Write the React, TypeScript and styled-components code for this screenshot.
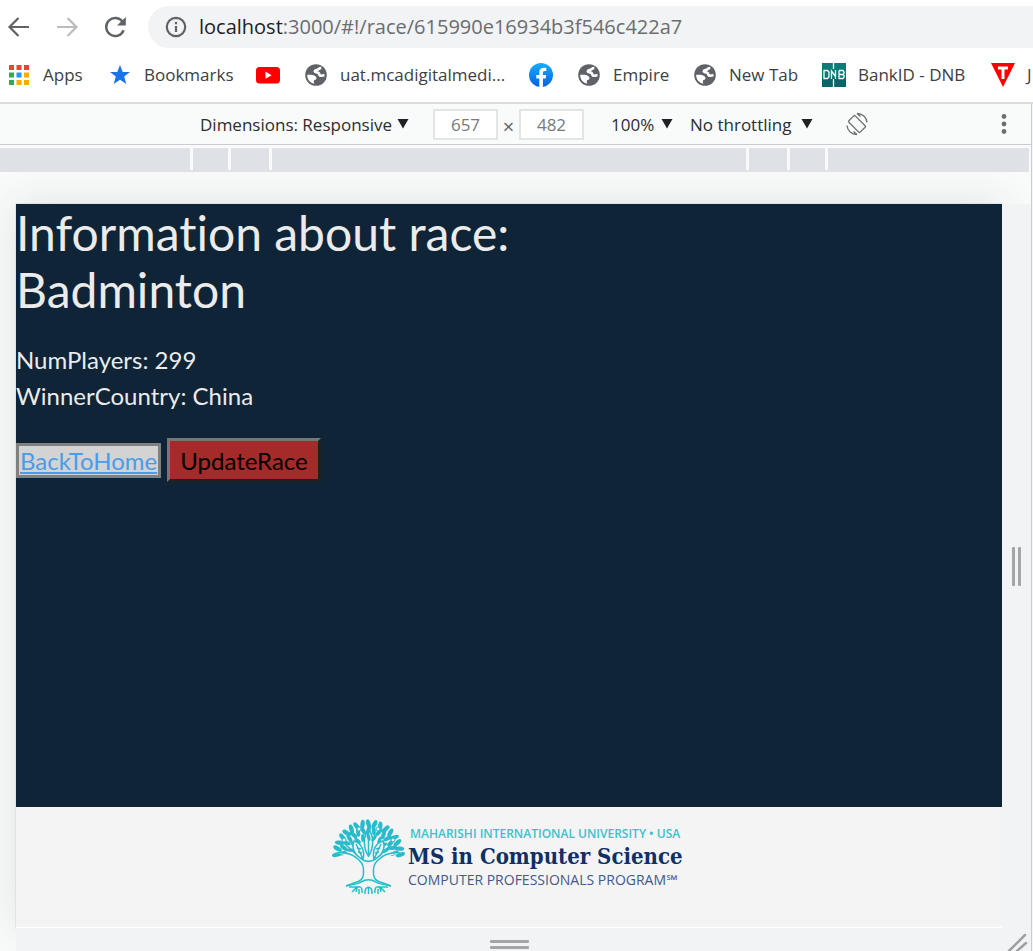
import React from "react";
import styled, { createGlobalStyle } from "styled-components";

const uiFont = `"Segoe UI", "Open Sans", "Noto Sans", sans-serif`;
const pageFont = `Lato, "Open Sans", sans-serif`;

const GlobalStyle = createGlobalStyle`
  *, *::before, *::after { box-sizing: border-box; }
  body { margin: 0; background: #fff; overflow: hidden; }
`;

const Window = styled.div`
  display: flex;
  flex-direction: column;
  height: 100vh;
  min-height: 640px;
  overflow: hidden;
  font-family: ${uiFont};
  color: #3c4043;
`;

/* Browser chrome */

const NavBar = styled.nav`
  display: flex;
  align-items: center;
  flex: none;
  height: 54px;
  padding-left: 7px;
  gap: 24px;
`;

const NavButton = styled.button`
  width: 24px;
  height: 24px;
  padding: 0;
  border: 0;
  background: none;
  svg { display: block; }
`;

const AddressBar = styled.div`
  display: flex;
  align-items: center;
  flex: 1;
  gap: 11px;
  height: 42px;
  margin-left: -3px;
  padding-left: 16px;
  border-radius: 21px 0 0 21px;
  background: #f1f3f4;
`;

const Url = styled.div`
  font-size: 20px;
  line-height: 24px;
  white-space: nowrap;
  color: #6a6d71;
`;

const Host = styled.span`
  color: #202124;
`;

const BookmarkBar = styled.div`
  display: flex;
  align-items: center;
  flex: none;
  height: 50px;
  padding: 0 0 6px 7px;
  border-bottom: 2px solid #dadcdb;
  overflow: hidden;
`;

const Bookmark = styled.a<{ $width: number }>`
  display: flex;
  align-items: center;
  flex: 0 0 ${(p) => p.$width}px;
  gap: 12px;
  font-size: 17px;
  line-height: 24px;
  white-space: nowrap;
  color: #3c4043;
  text-decoration: none;
  svg { flex: none; display: block; }
`;

/* Device toolbar */

const Workspace = styled.div`
  display: flex;
  flex: 1;
  min-height: 0;
`;

const DevicePane = styled.section`
  display: flex;
  flex-direction: column;
  flex: 1;
  min-width: 0;
  border-right: 1px solid #c9ccd2;
  background: #f9fbfa;
`;

const SidePane = styled.aside`
  flex: none;
  width: 1px;
  background: #f5f6f7;
`;

const DeviceToolbar = styled.div`
  display: grid;
  grid-template-columns: minmax(0, 200fr) auto minmax(0, 162fr);
  align-items: center;
  flex: none;
  height: 41px;
  border-bottom: 1px solid #c9ccd3;
`;

const Controls = styled.div`
  display: flex;
  align-items: center;
  grid-column: 2;
`;

const Picker = styled.label<{ $width: number; $after: number }>`
  display: flex;
  align-items: center;
  width: ${(p) => p.$width}px;
  margin-right: ${(p) => p.$after}px;
  svg { flex: none; display: block; }
`;

const Select = styled.select`
  flex: 1;
  min-width: 0;
  height: 26px;
  padding: 2px 0 0;
  border: 0;
  appearance: none;
  background: none;
  font-family: ${uiFont};
  font-size: 17px;
  line-height: 24px;
  color: #2b2d30;
`;

const SizeFields = styled.div`
  display: flex;
  align-items: center;
  margin-right: 27px;
`;

const SizeInput = styled.input`
  width: 65px;
  height: 31px;
  padding: 0;
  border: 2px solid #e2e5e4;
  background: #fff;
  font-family: ${uiFont};
  font-size: 17px;
  text-align: center;
  color: #77797c;
`;

const Times = styled.span`
  width: 21px;
  padding-top: 6px;
  font-size: 20px;
  line-height: 24px;
  text-align: center;
  color: #5f6368;
`;

const RotateButton = styled(NavButton)`
  margin-left: 32px;
`;

const MenuButton = styled(NavButton)`
  justify-self: end;
  margin-right: 15px;
`;

const Ruler = styled.div`
  display: grid;
  grid-template-columns: 190fr 35fr 38fr 474fr 38fr 35fr 201fr;
  column-gap: 3px;
  flex: none;
  height: 24px;
  margin: 3px 2px 0 0;
  border-bottom: 2px solid #dee1e6;
`;

const RulerBand = styled.div`
  background: #dee1e6;
`;

/* Emulated device */

const Stage = styled.div`
  display: grid;
  grid-template-columns: minmax(0, 1fr) 29px;
  grid-template-rows: minmax(0, 1fr) 23px;
  flex: 1;
  min-height: 0;
  padding: 32px 0 0 16px;
  overflow: hidden;
`;

const Device = styled.div`
  display: flex;
  flex-direction: column;
  box-shadow: 0 0 40px rgba(30, 50, 45, 0.12), 0 0 1px rgba(30, 50, 45, 0.4);
  border-bottom: 1px solid #fff;
`;

const Race = styled.main`
  flex: 1;
  background: #102437;
  color: #ebebeb;
  font-family: ${pageFont};
  font-size: 24px;
  font-variant-ligatures: none;
  line-height: 36px;
`;

const Title = styled.h1`
  max-width: 640px;
  margin: 0 0 24px;
  font-size: 48px;
  font-weight: 400;
  line-height: 57px;
`;

const Details = styled.p`
  margin: 0 0 24px;
`;

const Actions = styled.div`
  display: flex;
  align-items: center;
  gap: 6px;
`;

const HomeLink = styled.a`
  padding: 0 1px;
  border: 3px solid gray;
  background: lightgray;
  line-height: 29px;
  color: #4c9be8;
`;

const UpdateButton = styled.button`
  height: 44px;
  padding: 2px 10px 0;
  border: 3px outset #767676;
  background: brown;
  font-family: ${pageFont};
  font-size: 24px;
  line-height: 36px;
  color: #000;
`;

const Footer = styled.footer`
  display: flex;
  justify-content: center;
  align-items: flex-start;
  flex: none;
  height: 120px;
  padding-top: 12px;
  gap: 3px;
  background: #f4f4f4;
`;

const LogoText = styled.div`
  width: 278px;
  padding-top: 5px;
  white-space: nowrap;
`;

const University = styled.div`
  padding-left: 2px;
  font: 600 12px/20px "Open Sans", sans-serif;
  color: #3bc1cd;
`;

const Degree = styled.div`
  font: 700 22px/24px "DejaVu Serif Condensed", "DejaVu Serif", serif;
  font-stretch: condensed;
  color: #102f66;
`;

const Program = styled.div`
  font: 400 14px/24px "Open Sans", sans-serif;
  color: #43588c;
`;

const Resizer = styled.div<{ $vertical?: boolean }>`
  display: flex;
  flex-direction: ${(p) => (p.$vertical ? "row" : "column")};
  align-items: center;
  justify-content: center;
  gap: 3px;
  z-index: 1;
  padding-top: ${(p) => (p.$vertical ? 0 : 9)}px;
  background: #f1f3f4;
`;

const Grip = styled.span<{ $vertical?: boolean }>`
  flex: none;
  width: ${(p) => (p.$vertical ? 3 : 39)}px;
  height: ${(p) => (p.$vertical ? 39 : 3)}px;
  border-radius: 1px;
  background: #a5a5a5;
`;

const Corner = styled.div`
  z-index: 1;
  background: #f1f3f4;
  svg { display: block; }
`;

/* Icons */

const Arrow = ({ color, flip }: { color: string; flip?: boolean }) => (
  <svg width="24" height="24" viewBox="0 0 24 24" fill="none" stroke={color} strokeWidth="2.2">
    <path d={flip ? "M2 12H21M12.500 3L21.500 12L12.500 21" : "M22 12H3M11.500 3L2.500 12L11.500 21"} />
  </svg>
);

const Reload = () => (
  <svg width="24" height="24" viewBox="0 0 24 24">
    <path d="M19.800 7.200A9 9 0 1 0 20.600 15.200" fill="none" stroke="#5f6368" strokeWidth="2.4" />
    <path d="M22.800 2V10.500H14Z" fill="#5f6368" />
  </svg>
);

const Info = () => (
  <svg width="24" height="24" viewBox="0 0 24 24" fill="none" stroke="#5f6368" strokeWidth="2.2">
    <circle cx="12" cy="12" r="9.200" />
    <path d="M12 11V17M12 7V9.200" />
  </svg>
);

const AppsIcon = () => {
  const colors = ["#f44336", "#f44336", "#ea4335", "#34a853", "#2196f3", "#fbab08", "#34a853", "#fbab08", "#fbab08"];
  return (
    <svg width="24" height="24" viewBox="0 0 24 24">
      {colors.map((fill, i) => (
        <rect key={i} x={2 + (i % 3) * 7.5} y={2 + Math.floor(i / 3) * 7.5} width="5" height="5" fill={fill} />
      ))}
    </svg>
  );
};

const Star = () => (
  <svg width="24" height="24" viewBox="0 0 24 24">
    <path d="M12 2L14.700 9H22L16.200 13.600L18.300 21L12 16.700L5.700 21L7.800 13.600L2 9H9.300Z" fill="#1a73e8" />
  </svg>
);

const YouTube = () => (
  <svg width="24" height="24" viewBox="0 0 24 24">
    <rect y="4" width="24" height="16.500" rx="3.500" fill="#f00" />
    <path d="M9.500 8.600L15.600 12.200L9.500 15.800Z" fill="#fff" />
  </svg>
);

const Globe = () => (
  <svg width="24" height="24" viewBox="0 0 24 24">
    <circle cx="12" cy="12" r="10.800" fill="#5f6368" />
    <path
      d="M3.200 11.800C7 11.600 11 11.800 12.300 14.200C13 16 11.700 17 10 17.300C9.600 18.600 9.800 19.500 10.400 20.700C6.200 20 3 16.500 3.200 11.800Z"
      fill="#fff"
    />
    <path
      d="M17.300 5C14.500 5 15 6.800 12.600 7C10.300 7.400 10.200 9 12.200 9.200C14.500 9.300 15.300 10.200 15.500 12C16 13.400 18 12.500 20.500 12.300"
      fill="none"
      stroke="#fff"
      strokeWidth="2.600"
    />
  </svg>
);

const Facebook = () => (
  <svg width="24" height="24" viewBox="0 0 24 24">
    <defs>
      <linearGradient id="fb" x1="0" y1="0" x2="0" y2="1">
        <stop offset="0" stopColor="#18acfe" />
        <stop offset="1" stopColor="#0163e0" />
      </linearGradient>
    </defs>
    <circle cx="12" cy="12" r="12" fill="url(#fb)" />
    <path
      d="M16.700 15.500L17.200 12H13.900V9.800C13.900 8.900 14.300 8 15.800 8H17.300V5.100C13 4.200 10.300 5.700 10.300 9.300V12H7.300V15.500H10.300V23.900H13.900V15.500Z"
      fill="#fff"
    />
  </svg>
);

const Dnb = () => (
  <svg width="24" height="24" viewBox="0 0 24 24">
    <rect width="24" height="24" fill="#0b7a78" />
    <path d="M0 14H24V24H0Z" fill="#0a6468" />
    <path
      d="M2 7.500H5.500L7 9V14L5.500 15.500H2ZM9.500 16V8L13.500 13.500M13.500 16V7M17 7.500H21L22 9V10.500L21 11.500H17M21 11.500L22 12.500V14.500L21 15.500H17V7.500M11.500 0V6M11.500 16V24"
      fill="none"
      stroke="#fff"
      strokeWidth="1.300"
    />
  </svg>
);

const Tek = () => (
  <svg width="24" height="24" viewBox="0 0 24 24">
    <path d="M0 0H24L12 24Z" fill="#f00" />
    <path d="M7 5H17M12 5V16" stroke="#fff" strokeWidth="3" />
  </svg>
);

const Caret = () => (
  <svg width="12" height="12" viewBox="0 0 12 12">
    <path d="M0.500 1H11.500L6 10.500Z" fill="#202124" />
  </svg>
);

const Rotate = () => (
  <svg width="24" height="24" viewBox="0 0 24 24" fill="none" stroke="#6e6e6e" strokeWidth="1.300">
    <rect x="7.500" y="4" width="9" height="16" rx="1" transform="rotate(-45 12 12)" />
    <path d="M12 1.500C17.500 1.500 21.500 5 22 10.500M12 22.500C6.500 22.500 2.500 19 2 13.500M12 1.500L15.500 4.500M12 22.500L8.500 19.500" />
  </svg>
);

const Dots = () => (
  <svg width="24" height="24" viewBox="0 0 24 24" fill="#6e6e6e">
    <circle cx="12" cy="4.500" r="2.400" />
    <circle cx="12" cy="12" r="2.400" />
    <circle cx="12" cy="19.500" r="2.400" />
  </svg>
);

const leafRings = [
  { r: 33, count: 17, rx: 4.8, ry: 2.2, from: 184, to: 356 },
  { r: 27, count: 15, rx: 4.6, ry: 2, from: 188, to: 352 },
  { r: 20, count: 9, rx: 4, ry: 1.7, from: 200, to: 340 },
];

const Tree = () => (
  <svg width="73" height="77" viewBox="0 0 73 77" role="img" aria-label="Tree of life">
    <g fill="#27bccb">
      {leafRings.map((ring) =>
        Array.from({ length: ring.count }, (_, i) => {
          const deg = ring.from + ((ring.to - ring.from) * i) / (ring.count - 1);
          const a = (deg * Math.PI) / 180;
          const x = 36.5 + Math.cos(a) * (ring.r - 1);
          const y = 38 + Math.sin(a) * ring.r;
          return (
            <ellipse
              key={`${ring.r}-${i}`}
              cx={x}
              cy={y}
              rx={ring.rx}
              ry={ring.ry}
              transform={`rotate(${deg + (i % 2 ? 16 : -16)} ${x} ${y})`}
            />
          );
        })
      )}
    </g>
    <g fill="none" stroke="#27bccb" strokeWidth="1.500">
      <path
        d="M5 34C16 33 22 36 27 41C31 45 32 48 31.500 55C31 60 29 62 22 64L14 67L59 67L51 64C44 62 42 60 41.500 55C41 48 42 45 46 41C51 36 57 33 68 34L42 41H31Z"
        fill="#f4f4f4"
        stroke="none"
      />
      <path d="M5 34C16 33 22 36 27 41C31 45 32 48 31.500 55C31 60 29 62 22 64L14 67" />
      <path d="M68 34C57 33 51 36 46 41C42 45 41 48 41.500 55C42 60 44 62 51 64L59 67" />
      <path d="M13 25C19 30 25 37 31 41C35 43 38 43 42 41C48 37 54 30 60 25" />
      <path d="M22 22C30 24 33 33 31 40C23 37 19 29 22 22ZM24 25L31 40" fill="#f4f4f4" />
      <path d="M51 22C43 24 40 33 42 40C50 37 54 29 51 22ZM49 25L42 40" fill="#f4f4f4" />
      <path d="M25 29L29 30M26 33L30 34M48 29L44 30M47 33L43 34" />
      <path d="M36.500 37C31 29 31 17 36.500 10C42 17 42 29 36.500 37ZM36.500 14V38" />
      <path d="M14 67C20 65 25 66 29 63C34 60 39 60 44 63C48 66 53 65 59 67" />
      <path d="M17 68H25L20 73M56 68H48L53 73M24 73C25 66 31 66 30 74M33 75C32 66 41 66 40 75M43 74C42 66 48 66 49 73M36.500 69V75M27 70V75M46 70V75" />
    </g>
    <g fill="#f4f4f4" stroke="#27bccb">
      <circle cx="12" cy="21" r="2" />
      <circle cx="61" cy="21" r="2" />
      <circle cx="27" cy="10" r="2" />
      <circle cx="46" cy="10" r="2" />
    </g>
  </svg>
);

const bookmarks = [
  { label: "Apps", icon: <AppsIcon />, width: 101 },
  { label: "Bookmarks", icon: <Star />, width: 148 },
  { label: "", name: "YouTube", icon: <YouTube />, width: 48 },
  { label: "uat.mcadigitalmedi...", icon: <Globe />, width: 225 },
  { label: "", name: "Facebook", icon: <Facebook />, width: 48 },
  { label: "Empire", icon: <Globe />, width: 116 },
  { label: "New Tab", icon: <Globe />, width: 129 },
  { label: "BankID - DNB", icon: <Dnb />, width: 169 },
  { label: "J", icon: <Tek />, width: 60 },
];

export default function App() {
  return (
    <Window>
      <GlobalStyle />
      <NavBar>
        <NavButton aria-label="Back"><Arrow color="#5f6368" /></NavButton>
        <NavButton aria-label="Forward"><Arrow color="#babcbe" flip /></NavButton>
        <NavButton aria-label="Reload"><Reload /></NavButton>
        <AddressBar>
          <Info />
          <Url><Host>localhost</Host>:3000/#!/race/615990e16934b3f546c422a7</Url>
        </AddressBar>
      </NavBar>
      <BookmarkBar>
        {bookmarks.map((b, i) => (
          <Bookmark key={i} href="#" $width={b.width} aria-label={b.name}>
            {b.icon}
            {b.label}
          </Bookmark>
        ))}
      </BookmarkBar>
      <Workspace>
        <DevicePane>
          <DeviceToolbar>
            <Controls>
              <Picker $width={209} $after={24}>
                <Select aria-label="Device"><option>Dimensions: Responsive</option></Select>
                <Caret />
              </Picker>
              <SizeFields>
                <SizeInput aria-label="Width" defaultValue="657" />
                <Times>×</Times>
                <SizeInput aria-label="Height" defaultValue="482" />
              </SizeFields>
              <Picker $width={62} $after={17}>
                <Select aria-label="Zoom"><option>100%</option></Select>
                <Caret />
              </Picker>
              <Picker $width={123} $after={0}>
                <Select aria-label="Throttling"><option>No throttling</option></Select>
                <Caret />
              </Picker>
              <RotateButton aria-label="Rotate"><Rotate /></RotateButton>
            </Controls>
            <MenuButton aria-label="More options"><Dots /></MenuButton>
          </DeviceToolbar>
          <Ruler>
            {Array.from({ length: 7 }, (_, i) => <RulerBand key={i} />)}
          </Ruler>
          <Stage>
            <Device>
              <Race>
                <Title>Information about race:<br />Badminton</Title>
                <Details>NumPlayers: 299<br />WinnerCountry: China</Details>
                <Actions>
                  <HomeLink href="#!/">BackToHome</HomeLink>
                  <UpdateButton>UpdateRace</UpdateButton>
                </Actions>
              </Race>
              <Footer>
                <Tree />
                <LogoText>
                  <University>MAHARISHI INTERNATIONAL UNIVERSITY • USA</University>
                  <Degree>MS in Computer Science</Degree>
                  <Program>COMPUTER PROFESSIONALS PROGRAM℠</Program>
                </LogoText>
              </Footer>
            </Device>
            <Resizer $vertical><Grip $vertical /><Grip $vertical /></Resizer>
            <Resizer><Grip /><Grip /></Resizer>
            <Corner>
              <svg width="29" height="23" viewBox="0 0 29 23" stroke="#a0a0a0" strokeWidth="2.500" strokeLinecap="round">
                <path d="M7 23L23 7M15 23L24 15" />
              </svg>
            </Corner>
          </Stage>
        </DevicePane>
        <SidePane />
      </Workspace>
    </Window>
  );
}
